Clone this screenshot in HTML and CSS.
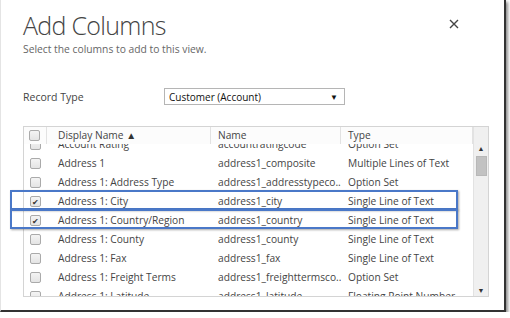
FILE: index.html
```html
<!DOCTYPE html>
<html lang="en">
<head>
  <meta charset="UTF-8">
  <title>Add Columns</title>
  <link rel="stylesheet" href="styles.css">
</head>
<body>
  <div class="dialog">
    <!-- HEADER -->
    <div class="dialog-head">
      <h1 class="title">Add Columns</h1>
      <svg class="close" width="10" height="10" viewBox="0 0 10 10">
        <path d="M1 1 L9 9 M9 1 L1 9" stroke="#444" stroke-width="1.4" fill="none"/>
      </svg>
    </div>
    <p class="subtitle">Select the columns to add to this view.</p>

    <!-- RECORD TYPE -->
    <div class="record-type">
      <span class="record-label">Record Type</span>
      <div class="select">
        <span>Customer (Account)</span>
        <span class="select-arrow">&#9660;</span>
      </div>
    </div>

    <!-- GRID -->
    <div class="grid">
      <div class="grid-main">
        <div class="grid-header">
          <div class="cell col-check"><span class="checkbox"></span></div>
          <div class="cell col-display">Display Name <span class="sort">&#9650;</span></div>
          <div class="cell col-name">Name</div>
          <div class="cell col-type">Type</div>
        </div>
        <div class="grid-body">
          <div class="rows">
            <div class="row">
              <div class="cell col-check"><span class="checkbox"></span></div>
              <div class="cell col-display">Account Rating</div>
              <div class="cell col-name">accountratingcode</div>
              <div class="cell col-type">Option Set</div>
            </div>
            <div class="row">
              <div class="cell col-check"><span class="checkbox"></span></div>
              <div class="cell col-display">Address 1</div>
              <div class="cell col-name">address1_composite</div>
              <div class="cell col-type">Multiple Lines of Text</div>
            </div>
            <div class="row">
              <div class="cell col-check"><span class="checkbox"></span></div>
              <div class="cell col-display">Address 1: Address Type</div>
              <div class="cell col-name">address1_addresstypeco...</div>
              <div class="cell col-type">Option Set</div>
            </div>
            <div class="row">
              <div class="cell col-check"><span class="checkbox checked">&#10004;</span></div>
              <div class="cell col-display">Address 1: City</div>
              <div class="cell col-name">address1_city</div>
              <div class="cell col-type">Single Line of Text</div>
            </div>
            <div class="row">
              <div class="cell col-check"><span class="checkbox checked">&#10004;</span></div>
              <div class="cell col-display">Address 1: Country/Region</div>
              <div class="cell col-name">address1_country</div>
              <div class="cell col-type">Single Line of Text</div>
            </div>
            <div class="row">
              <div class="cell col-check"><span class="checkbox"></span></div>
              <div class="cell col-display">Address 1: County</div>
              <div class="cell col-name">address1_county</div>
              <div class="cell col-type">Single Line of Text</div>
            </div>
            <div class="row">
              <div class="cell col-check"><span class="checkbox"></span></div>
              <div class="cell col-display">Address 1: Fax</div>
              <div class="cell col-name">address1_fax</div>
              <div class="cell col-type">Single Line of Text</div>
            </div>
            <div class="row">
              <div class="cell col-check"><span class="checkbox"></span></div>
              <div class="cell col-display">Address 1: Freight Terms</div>
              <div class="cell col-name">address1_freighttermsco...</div>
              <div class="cell col-type">Option Set</div>
            </div>
            <div class="row">
              <div class="cell col-check"><span class="checkbox"></span></div>
              <div class="cell col-display">Address 1: Latitude</div>
              <div class="cell col-name">address1_latitude</div>
              <div class="cell col-type">Floating Point Number</div>
            </div>
          </div>
        </div>
      </div>
      <!-- SCROLLBAR -->
      <div class="scrollbar">
        <div class="scroll-head"></div>
        <span class="scroll-arrow">&#9650;</span>
        <div class="scroll-thumb"></div>
        <div class="scroll-track"></div>
        <span class="scroll-arrow">&#9660;</span>
      </div>
    </div>

    <!-- HIGHLIGHTS -->
    <div class="highlight hl-city"></div>
    <div class="highlight hl-country"></div>
  </div>
</body>
</html>
```

FILE: styles.css
```css
body {
  margin: 0;
  background: #fff;
  font-family: "Open Sans", "Noto Sans", sans-serif;
  color: #444;
}

.dialog {
  position: relative;
  width: 506px;
  height: 312px;
  box-sizing: border-box;
  padding: 0 0 0 22px;
  background: #fff;
  border-left: 1px solid #e4e4e4;
  border-right: 2px solid #333;
  border-bottom: 2px solid #333;
  box-shadow: 2px 2px 3px rgba(0, 0, 0, 0.45);
}

.dialog-head {
  display: flex;
  justify-content: space-between;
  align-items: flex-start;
  padding-right: 45px;
}

.title {
  margin: 10px 0 0 0;
  font-size: 25px;
  font-weight: 300;
  line-height: 30px;
  color: #444;
  letter-spacing: -0.7px;
}

.close {
  margin-top: 19px;
}

.subtitle {
  margin: 2px 0 0;
  font-size: 10.3px;
  line-height: 14px;
  color: #666;
}

.record-type {
  display: flex;
  align-items: center;
  margin-top: 32px;
}

.record-label {
  width: 141px;
  font-size: 10.5px;
  color: #444;
}

.select {
  display: flex;
  justify-content: space-between;
  align-items: center;
  width: 181px;
  height: 17px;
  box-sizing: border-box;
  padding: 0 6px 0 4px;
  border: 1px solid #b5b5b5;
  font-size: 10px;
  color: #111;
}

.select-arrow {
  font-size: 8px;
}

.grid {
  display: flex;
  width: 466px;
  height: 171px;
  margin-top: 21px;
  box-sizing: border-box;
  border: 1px solid #d4d4d4;
  font-size: 10.2px;
  color: #444;
}

.grid-main {
  flex: 1;
  display: flex;
  flex-direction: column;
  overflow: hidden;
}

.grid-header {
  display: flex;
  height: 17px;
  flex: none;
  background: #fcfcfc;
  position: relative;
  z-index: 1;
}

.grid-header .cell {
  border-right: 1px solid #e2e2e2;
  height: 17px;
  line-height: 17px;
}

.grid-body {
  flex: 1;
  overflow: hidden;
}

.rows {
  margin-top: -9px;
}

.row {
  display: flex;
  height: 19px;
  line-height: 19px;
}

.cell {
  box-sizing: border-box;
  white-space: nowrap;
  overflow: hidden;
}

.col-check {
  width: 23px;
  display: flex;
  align-items: center;
  justify-content: center;
  padding-right: 1px;
}

.col-display {
  width: 164px;
  padding-left: 11px;
}

.col-name {
  width: 130px;
  padding-left: 7px;
}

.col-type {
  width: 132px;
  padding-left: 7px;
}

.sort {
  font-size: 10px;
  vertical-align: 0;
  color: #333;
}

.checkbox {
  display: inline-block;
  width: 11px;
  height: 11px;
  box-sizing: border-box;
  border: 1px solid #aaa;
  border-radius: 2px;
  background: linear-gradient(#f4f4f4, #e4e4e4);
  font-size: 8px;
  line-height: 9px;
  text-align: center;
  color: #333;
}

.scrollbar {
  width: 15px;
  flex: none;
  display: flex;
  flex-direction: column;
  align-items: center;
  background: #f0f0f0;
  border-left: 1px solid #e2e2e2;
  box-sizing: border-box;
}

.scroll-head {
  height: 17px;
  width: 100%;
}

.scroll-arrow {
  font-size: 7px;
  line-height: 10px;
  color: #333;
}

.scroll-thumb {
  width: 11px;
  height: 20px;
  margin-top: 2px;
  background: #c2c2c2;
  border: 1px solid #b8b8b8;
  box-sizing: border-box;
}

.scroll-track {
  flex: 1;
}

.highlight {
  position: absolute;
  left: 9px;
  width: 448px;
  height: 20px;
  box-sizing: border-box;
  border: 2px solid #4a78c8;
  box-shadow: 1px 1px 2px rgba(0, 0, 0, 0.35);
}

.hl-city {
  top: 190px;
}

.hl-country {
  top: 209px;
}
```
